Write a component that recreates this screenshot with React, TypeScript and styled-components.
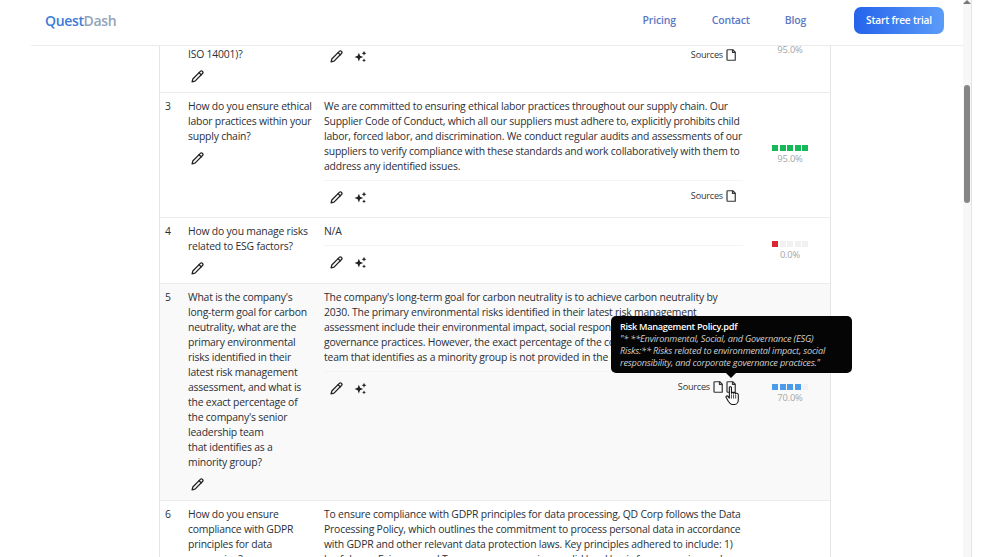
import React from "react";
import styled, { createGlobalStyle } from "styled-components";

const Global = createGlobalStyle`
  html, body { margin: 0; padding: 0; height: 100%; overflow: hidden; background: #fff; }
  body { font-family: "Open Sans", "Noto Sans", sans-serif; }
  #root { height: 100%; }
`;

const Page = styled.div`
  display: flex;
  width: 999px;
  height: 557px;
  overflow: hidden;
  background: #fff;
`;
const Main = styled.div`
  width: 963px;
  height: 557px;
  display: flex;
  flex-direction: column;
  flex: none;
`;
const Header = styled.header`
  height: 46px;
  box-sizing: border-box;
  margin-left: 31px;
  padding: 0 19px 5px 14px;
  border-bottom: 1px solid #ededed;
  display: flex;
  align-items: center;
  background: #fff;
  position: relative;
  z-index: 2;
  flex: none;
`;
const Logo = styled.div`
  font-size: 14px;
  font-weight: 600;
  letter-spacing: -0.35px;
  color: #94a3b8;
  span { color: #3b7dd8; }
`;
const Nav = styled.nav`
  margin-left: auto;
  display: flex;
  align-items: center;
`;
const NavLink = styled.a<{ $gap: number }>`
  font-size: 10.5px;
  font-weight: 600;
  letter-spacing: -0.2px;
  color: #5c78c4;
  margin-right: ${(p) => p.$gap}px;
`;
const CTA = styled.button`
  width: 90px;
  height: 27px;
  border: none;
  border-radius: 7px;
  background: linear-gradient(90deg, #2563eb, #5b9cf8);
  color: #fff;
  font-family: inherit;
  font-size: 10.2px;
  font-weight: 600;
  letter-spacing: -0.2px;
  padding: 0;
`;
const Scroll = styled.div`
  flex: 1;
  min-height: 0;
  overflow: hidden;
`;
const Table = styled.div`
  width: 672px;
  margin: -46px 0 0 159px;
  border-left: 1px solid #e5e5e5;
  border-right: 1px solid #e5e5e5;
  box-sizing: border-box;
`;
const Row = styled.div<{ $h: number; $shaded?: boolean }>`
  height: ${(p) => p.$h}px;
  box-sizing: border-box;
  display: grid;
  grid-template-columns: 23px 136px 426px 1fr;
  background: ${(p) => (p.$shaded ? "#f9f9f9" : "#fff")};
  border-bottom: 1px solid #ececec;
  padding: 6px 0 0 5px;
  color: #2b2f36;
  font-size: 10.4px;
  letter-spacing: -0.2px;
  line-height: 15px;
`;
const Num = styled.div``;
const Question = styled.div<{ $top?: number }>`
  padding-top: ${(p) => p.$top ?? 0}px;
`;
const Line = styled.span`
  display: block;
  white-space: nowrap;
`;
const Answer = styled.div<{ $top?: number }>`
  width: 419px;
  display: flex;
  flex-direction: column;
  padding-top: ${(p) => p.$top ?? 0}px;
`;
const AnswerText = styled.div`
  padding-bottom: 6px;
  border-bottom: 1px solid #f4f4f4;
`;
const Actions = styled.div`
  display: flex;
  justify-content: space-between;
  align-items: flex-start;
  padding: 8px 7px 0 6px;
`;
const IconGroup = styled.div`
  display: flex;
  align-items: center;
  gap: 11px;
  color: #222;
  margin-top: 2px;
`;
const QEdit = styled.div`
  margin-top: 8px;
  color: #222;
  padding-left: 3px;
  height: 12px;
`;
const Sources = styled.div`
  display: flex;
  align-items: center;
  gap: 3px;
  margin-top: -1px;
  color: #333;
  font-size: 9.1px;
  position: relative;
`;
const Score = styled.div<{ $shift?: number }>`
  margin-top: ${(p) => -6 + (p.$shift ?? 0)}px;
  display: flex;
  flex-direction: column;
  align-items: center;
  justify-content: center;
`;
const Bars = styled.div`
  display: flex;
  gap: 1.5px;
`;
const Bar = styled.i<{ $c: string }>`
  display: block;
  width: 6px;
  height: 6px;
  background: ${(p) => p.$c};
`;
const Pct = styled.div`
  font-size: 9.4px;
  line-height: 12px;
  margin-top: 2px;
  color: #a6a6a6;
`;
const DocWrap = styled.span`
  position: relative;
  display: inline-flex;
`;
const Tooltip = styled.div`
  position: absolute;
  left: -115px;
  bottom: 20px;
  width: 241px;
  height: 57px;
  box-sizing: border-box;
  padding: 5px 9px;
  background: #050505;
  border-radius: 5px;
  font-size: 9.2px;
  letter-spacing: -0.2px;
  line-height: 12px;
  z-index: 3;
  &::after {
    content: "";
    position: absolute;
    left: 115px;
    bottom: -5px;
    border-left: 5px solid transparent;
    border-right: 5px solid transparent;
    border-top: 5px solid #050505;
  }
`;
const TipTitle = styled.div`
  color: #fff;
  font-weight: 600;
  letter-spacing: -0.3px;
`;
const TipBody = styled.div`
  font-style: italic;
  color: #cfcfcf;
  white-space: nowrap;
`;
const Hand = styled.svg`
  position: absolute;
  left: -1px;
  top: 5px;
  z-index: 4;
`;
const Chrome = styled.div`
  width: 8px;
  height: 557px;
  background: #f7f7f7;
  flex: none;
  display: flex;
  flex-direction: column;
  align-items: center;
`;
const Arrow = styled.div`
  width: 0;
  height: 0;
  border-left: 4px solid transparent;
  border-right: 4px solid transparent;
  border-bottom: 4px solid #777;
`;
const Thumb = styled.div`
  width: 6px;
  height: 118px;
  margin-top: 81px;
  border-radius: 3px;
  background: #858585;
`;
const Edge = styled.div`
  width: 1px;
  height: 557px;
  background: #c9f7c9;
  flex: none;
`;

const Pencil = () => (
  <svg width="13" height="13" viewBox="0 0 24 24" fill="none" stroke="currentColor" strokeWidth="2.4" strokeLinecap="round" strokeLinejoin="round">
    <path d="M21.2 6.600a2.800 2.800 0 0 0-4-4L3.800 16a2 2 0 0 0-.5.8L2 21.900l5.100-1.300a2 2 0 0 0 .8-.5z" />
    <path d="m15 5 4 4" />
  </svg>
);
const Sparkle = () => (
  <svg width="13" height="13" viewBox="0 0 24 24" fill="currentColor">
    <path d="M9 5l2.200 5.800L17 13l-5.800 2.200L9 21l-2.200-5.800L1 13l5.800-2.200z" />
    <path d="m18.500 1.500 1.300 3.200 3.200 1.300-3.200 1.300-1.300 3.200-1.300-3.200L14 6l3.200-1.300z" />
    <path d="m18.500 15.500 1.100 2.400 2.400 1.100-2.400 1.100-1.100 2.400-1.100-2.400L15 19l2.400-1.100z" />
  </svg>
);
const Doc = () => (
  <svg width="10" height="12" viewBox="0 0 20 24" fill="none" stroke="currentColor" strokeWidth="2.400" strokeLinejoin="round">
    <path d="M3.500 1.500h10l5 5v16h-15a1.500 1.500 0 0 1-1.500-1.500V3a1.500 1.500 0 0 1 1.500-1.500z" />
    <path d="M13 1.500v5.500h5.500" />
  </svg>
);
const HandCursor = () => (
  <Hand width="15" height="20" viewBox="0 0 14 19">
    <path d="M4 1.500c0-1 2-1 2 0V7c0-1 2-1 2 0 0-1 2-1 2 .5 0-1 2.500-.8 2.500.8V13c0 2.500-1.500 4.500-3.500 4.500H6.500C5 17.500 4 16 3 14.500L1 11c-.7-1.200.8-2.200 1.700-1.200L4 11.500z" fill="#fff" stroke="#111" strokeWidth="1" strokeLinejoin="round" />
    <path d="M6 8v4M8 8v4M10 8.500V12" stroke="#111" strokeWidth=".7" fill="none" />
  </Hand>
);

const ScoreBars = ({ filled, color, pct, shift }: { filled: number; color: string; pct: string; shift?: number }) => (
  <Score $shift={shift}>
    <Bars>
      {[0, 1, 2, 3, 4].map((i) => (
        <Bar key={i} $c={i < filled ? color : "#f1f1f1"} />
      ))}
    </Bars>
    <Pct>{pct}</Pct>
  </Score>
);

const Lines = ({ items }: { items: string[] }) => (
  <>
    {items.map((t) => (
      <Line key={t}>{t}</Line>
    ))}
  </>
);

const EditIcons = () => (
  <IconGroup>
    <Pencil />
    <Sparkle />
  </IconGroup>
);

export default function App() {
  return (
    <Page>
      <Global />
      <Main>
        <Header>
          <Logo>
            <span>Quest</span>Dash
          </Logo>
          <Nav>
            <NavLink $gap={36}>Pricing</NavLink>
            <NavLink $gap={35}>Contact</NavLink>
            <NavLink $gap={48}>Blog</NavLink>
            <CTA>Start free trial</CTA>
          </Nav>
        </Header>
        <Scroll>
          <Table>
            <Row $h={93}>
              <Num />
              <Question $top={41}>
                <Line>ISO 14001)?</Line>
                <QEdit>
                  <Pencil />
                </QEdit>
              </Question>
              <Answer $top={34}>
                <Actions>
                  <EditIcons />
                  <Sources>
                    Sources <Doc />
                  </Sources>
                </Actions>
              </Answer>
              <ScoreBars filled={5} color="#16b85a" pct="95.0%" />
            </Row>
            <Row $h={125}>
              <Num>3</Num>
              <Question>
                <Lines items={["How do you ensure ethical", "labor practices within your", "supply chain?"]} />
                <QEdit>
                  <Pencil />
                </QEdit>
              </Question>
              <Answer>
                <AnswerText>
                  <Lines
                    items={[
                      "We are committed to ensuring ethical labor practices throughout our supply chain. Our",
                      "Supplier Code of Conduct, which all our suppliers must adhere to, explicitly prohibits child",
                      "labor, forced labor, and discrimination. We conduct regular audits and assessments of our",
                      "suppliers to verify compliance with these standards and work collaboratively with them to",
                      "address any identified issues.",
                    ]}
                  />
                </AnswerText>
                <Actions>
                  <EditIcons />
                  <Sources>
                    Sources <Doc />
                  </Sources>
                </Actions>
              </Answer>
              <ScoreBars filled={5} color="#16b85a" pct="95.0%" />
            </Row>
            <Row $h={66}>
              <Num>4</Num>
              <Question>
                <Lines items={["How do you manage risks", "related to ESG factors?"]} />
                <QEdit>
                  <Pencil />
                </QEdit>
              </Question>
              <Answer>
                <AnswerText>N/A</AnswerText>
                <Actions>
                  <EditIcons />
                </Actions>
              </Answer>
              <ScoreBars filled={1} color="#dc2630" pct="0.0%" />
            </Row>
            <Row $h={217} $shaded>
              <Num>5</Num>
              <Question>
                <Lines
                  items={[
                    "What is the company's",
                    "long-term goal for carbon",
                    "neutrality, what are the",
                    "primary environmental",
                    "risks identified in their",
                    "latest risk management",
                    "assessment, and what is",
                    "the exact percentage of",
                    "the company's senior",
                    "leadership team",
                    "that identifies as a",
                    "minority group?",
                  ]}
                />
                <QEdit>
                  <Pencil />
                </QEdit>
              </Question>
              <Answer>
                <AnswerText>
                  <Lines
                    items={[
                      "The company's long-term goal for carbon neutrality is to achieve carbon neutrality by",
                      "2030. The primary environmental risks identified in their latest risk management",
                      "assessment include their environmental impact, social responsibility, and corporate",
                      "governance practices. However, the exact percentage of the company's senior leadership",
                      "team that identifies as a minority group is not provided in the context.",
                    ]}
                  />
                </AnswerText>
                <Actions>
                  <EditIcons />
                  <Sources>
                    Sources <Doc />
                    <DocWrap>
                      <Doc />
                      <Tooltip>
                        <TipTitle>Risk Management Policy.pdf</TipTitle>
                        <TipBody>
                          "* **Environmental, Social, and Governance (ESG)
                          <br />
                          Risks:** Risks related to environmental impact, social
                          <br />
                          responsibility, and corporate governance practices."
                        </TipBody>
                      </Tooltip>
                      <HandCursor />
                    </DocWrap>
                  </Sources>
                </Actions>
              </Answer>
              <ScoreBars filled={4} color="#4c9be8" pct="70.0%" shift={3} />
            </Row>
            <Row $h={120}>
              <Num>6</Num>
              <Question>
                <Lines items={["How do you ensure", "compliance with GDPR", "principles for data", "processing?"]} />
              </Question>
              <Answer>
                <AnswerText>
                  <Lines
                    items={[
                      "To ensure compliance with GDPR principles for data processing, QD Corp follows the Data",
                      "Processing Policy, which outlines the commitment to process personal data in accordance",
                      "with GDPR and other relevant data protection laws. Key principles adhered to include: 1)",
                      "lawfulness, Fairness, and Transparency: ensuring a valid legal basis for processing and",
                    ]}
                  />
                </AnswerText>
              </Answer>
            </Row>
          </Table>
        </Scroll>
      </Main>
      <Chrome>
        <Arrow />
        <Thumb />
      </Chrome>
      <Edge />
    </Page>
  );
}
